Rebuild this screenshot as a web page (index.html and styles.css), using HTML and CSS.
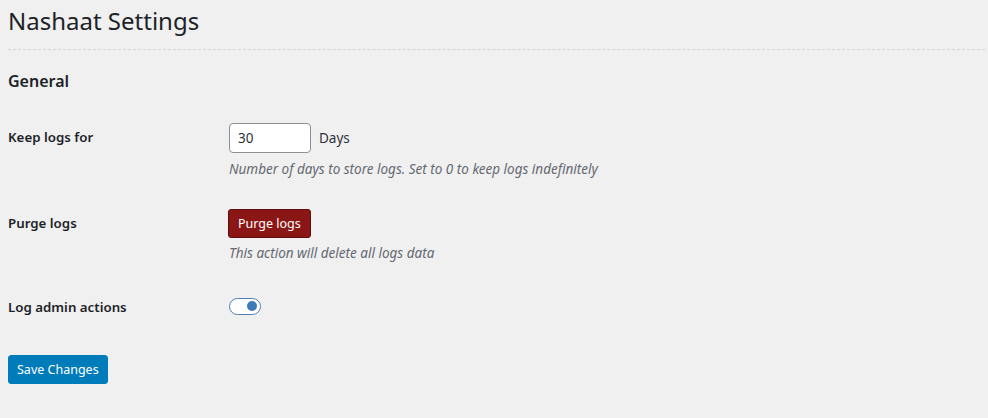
FILE: index.html
```html
<!DOCTYPE html>
<html lang="en">
<head>
<meta charset="utf-8">
<title>Nashaat Settings</title>
<link rel="stylesheet" href="styles.css">
</head>
<body>
<div class="wrap">
  <h1 class="page-title">Nashaat Settings</h1>
  <hr class="header-end">
  <h2 class="section-title">General</h2>
  <div class="form-table">
    <div class="row row-first">
      <div class="th">Keep logs for</div>
      <div class="td">
        <div class="inline-field">
          <input class="small-text" type="text" value="30">
          <span class="unit">Days</span>
        </div>
        <p class="description">Number of days to store logs. Set to 0 to keep logs indefinitely</p>
      </div>
    </div>
    <div class="row">
      <div class="th">Purge logs</div>
      <div class="td">
        <button class="button button-danger" type="button">Purge logs</button>
        <p class="description">This action will delete all logs data</p>
      </div>
    </div>
    <div class="row">
      <div class="th">Log admin actions</div>
      <div class="td">
        <div class="toggle-line">
          <span class="toggle"><span class="knob"></span></span>
        </div>
      </div>
    </div>
  </div>
  <p class="submit">
    <button class="button button-primary" type="submit">Save Changes</button>
  </p>
</div>
</body>
</html>
```

FILE: styles.css
```css
html, body {
  margin: 0;
  padding: 0;
  background: #f0f0f1;
}
body {
  font-family: "Noto Sans", "Open Sans", sans-serif;
  color: #1d2327;
  font-size: 13.5px;
}
.wrap {
  padding: 0 3px 0 8px;
}
.page-title {
  margin: 0;
  padding-top: 4px;
  font-size: 24px;
  line-height: 34px;
  font-weight: 400;
  color: #1d2327;
}
.header-end {
  margin: 11px 0 0 0;
  border: 0;
  height: 0;
  border-top: 1px dashed #d5d5d7;
}
.section-title {
  margin: 20px 0 0 0;
  font-size: 16px;
  line-height: 22px;
  font-weight: 600;
  color: #1d2327;
}
.form-table {
  margin-top: 16px;
  display: flex;
  flex-direction: column;
}
.row {
  display: grid;
  grid-template-columns: 221px 1fr;
}
.th {
  padding: 20px 10px 20px 0;
  font-weight: 600;
  line-height: 18px;
  font-size: 13.3px;
}
.td {
  padding: 15px 0;
}
.inline-field {
  display: flex;
  align-items: center;
  gap: 8px;
}
.small-text {
  box-sizing: border-box;
  width: 82px;
  height: 30px;
  border: 1px solid #8c8f94;
  border-radius: 4px;
  background: #fff;
  padding: 0 8px;
  font-family: inherit;
  font-size: 13.5px;
  color: #2c3338;
  margin: 0;
}
.unit {
  font-size: 13.5px;
  color: #2c3338;
}
.description {
  margin: 6px 0 0 0;
  font-style: italic;
  font-size: 13.5px;
  line-height: 20px;
  color: #646970;
}
.button {
  box-sizing: border-box;
  font-family: inherit;
  font-size: 12.5px;
  line-height: 26px;
  height: 29px;
  padding: 0 9px;
  border-radius: 3px;
  cursor: pointer;
  margin: 0;
  white-space: nowrap;
}
.button-danger {
  background: #8a1616;
  border: 1px solid #5e0e0e;
  color: #fff;
  padding: 0 9px;
  margin-left: -1px;
}
.button-danger + .description {
  margin-top: 5px;
}
.toggle-line {
  height: 26px;
  display: flex;
  align-items: center;
}
.toggle {
  box-sizing: border-box;
  width: 32px;
  height: 17px;
  border: 1px solid #4f80b3;
  border-radius: 9px;
  background: #fff;
  display: flex;
  align-items: center;
  justify-content: flex-end;
  padding-right: 3px;
}
.knob {
  width: 10px;
  height: 10px;
  border-radius: 50%;
  background: #3d7ab8;
}
.submit {
  margin: 19px 0 0 0;
}
.button-primary {
  background: #007cba;
  border: 1px solid #007cba;
  color: #fff;
  padding: 0 8px;
}
```
